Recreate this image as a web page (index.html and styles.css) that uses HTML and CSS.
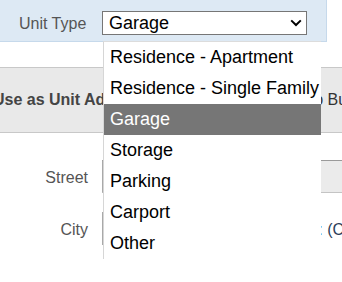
FILE: index.html
```html
<!DOCTYPE html>
<html lang="en">
<head>
    <meta charset="UTF-8">
    <meta name="viewport" content="width=device-width, initial-scale=1.0">
    <title>Unit Details</title>
    <link rel="stylesheet" href="styles.css">
</head>
<body>
    <div class="page">
        <!-- Unit type bar -->
        <div class="type-bar">
            <span class="type-label">Unit Type</span>
            <div class="select">
                <span>Garage</span>
                <svg class="chevron" width="12" height="8" viewBox="0 0 12 8">
                    <path d="M1.2 1.4 L6 6 L10.8 1.4" fill="none" stroke="#000" stroke-width="2"/>
                </svg>
            </div>
        </div>

        <div class="spacer"></div>

        <!-- Address table header -->
        <div class="table-head">
            <div class="th th-main">Use as Unit Address</div>
            <div class="th th-copy">Copy to Building Address</div>
        </div>

        <!-- Address fields -->
        <div class="form-row row-street">
            <label class="field-label">Street</label>
            <div class="input input-street"></div>
        </div>
        <div class="form-row row-city">
            <label class="field-label">City</label>
            <div class="input input-city"></div>
            <span class="field-note">State: (CA)</span>
        </div>

        <!-- Open dropdown list -->
        <ul class="options">
            <li>Residence - Apartment</li>
            <li>Residence - Single Family</li>
            <li class="selected">Garage</li>
            <li>Storage</li>
            <li>Parking</li>
            <li>Carport</li>
            <li>Other</li>
        </ul>
    </div>
</body>
</html>
```

FILE: styles.css
```css
body {
    margin: 0;
    padding: 0;
    background-color: #fff;
    font-family: 'Liberation Sans', Arial, sans-serif;
    color: #333;
    overflow: hidden;
}
.page {
    position: relative;
    width: 342px;
    height: 282px;
    overflow: hidden;
}
.type-bar {
    width: 326px;
    height: 41px;
    background-color: #dde9f4;
    border-right: 1px solid #c6d9eb;
    border-bottom: 1px solid #c6d9eb;
    display: flex;
    align-items: flex-start;
}
.type-label {
    margin: 15px 14px 0 19px;
    width: 69px;
    flex-shrink: 0;
    font-size: 16px;
    color: #555;
    white-space: nowrap;
}
.select {
    margin-top: 11px;
    width: 197px;
    height: 22px;
    padding-left: 6px;
    border: 1px solid #767676;
    background-color: #fff;
    display: flex;
    align-items: center;
    justify-content: space-between;
    font-size: 18px;
    color: #000;
    line-height: 22px;
}
.chevron {
    margin-right: 4px;
}
.spacer {
    height: 25px;
}
.table-head {
    height: 64px;
    background-color: #e9e9e9;
    border-top: 1px solid #c8c8c8;
    border-bottom: 1px solid #c8c8c8;
    display: flex;
    align-items: center;
    white-space: nowrap;
    font-size: 16px;
}
.th {
    flex-shrink: 0;
}
.th-main {
    margin-left: -7px;
    width: 275px;
    font-weight: bold;
    color: #444;
}
.th-copy {
    color: #333;
}
.form-row {
    display: flex;
    align-items: center;
    white-space: nowrap;
}
.row-street {
    margin-top: 27px;
}
.row-city {
    margin-top: 19px;
}
.field-label {
    width: 88px;
    margin-right: 14px;
    padding-top: 2px;
    flex-shrink: 0;
    text-align: right;
    font-size: 16px;
    color: #555;
}
.input {
    height: 31px;
    border: 1px solid #a9a9a9;
    flex-shrink: 0;
}
.input-street {
    width: 260px;
    background-color: #ebebeb;
    border-top-color: #9a9a9a;
    border-bottom-color: #c4c4c4;
}
.input-city {
    width: 172px;
    background-color: #fff;
}
.field-note {
    margin-left: 5px;
    padding-top: 2px;
    flex-shrink: 0;
    font-size: 16px;
    color: #2c3e5a;
}
.options {
    position: absolute;
    top: 41px;
    left: 103px;
    width: 217px;
    margin: 0;
    padding: 0;
    list-style: none;
    background-color: #fff;
    border-top: 1px solid #dcdcdc;
    border-left: 1px solid #d6d6d6;
}
.options li {
    height: 31px;
    line-height: 31px;
    padding-left: 6px;
    font-size: 18px;
    color: #000;
    white-space: nowrap;
}
.options li.selected {
    background-color: #767676;
    color: #fff;
}
```
